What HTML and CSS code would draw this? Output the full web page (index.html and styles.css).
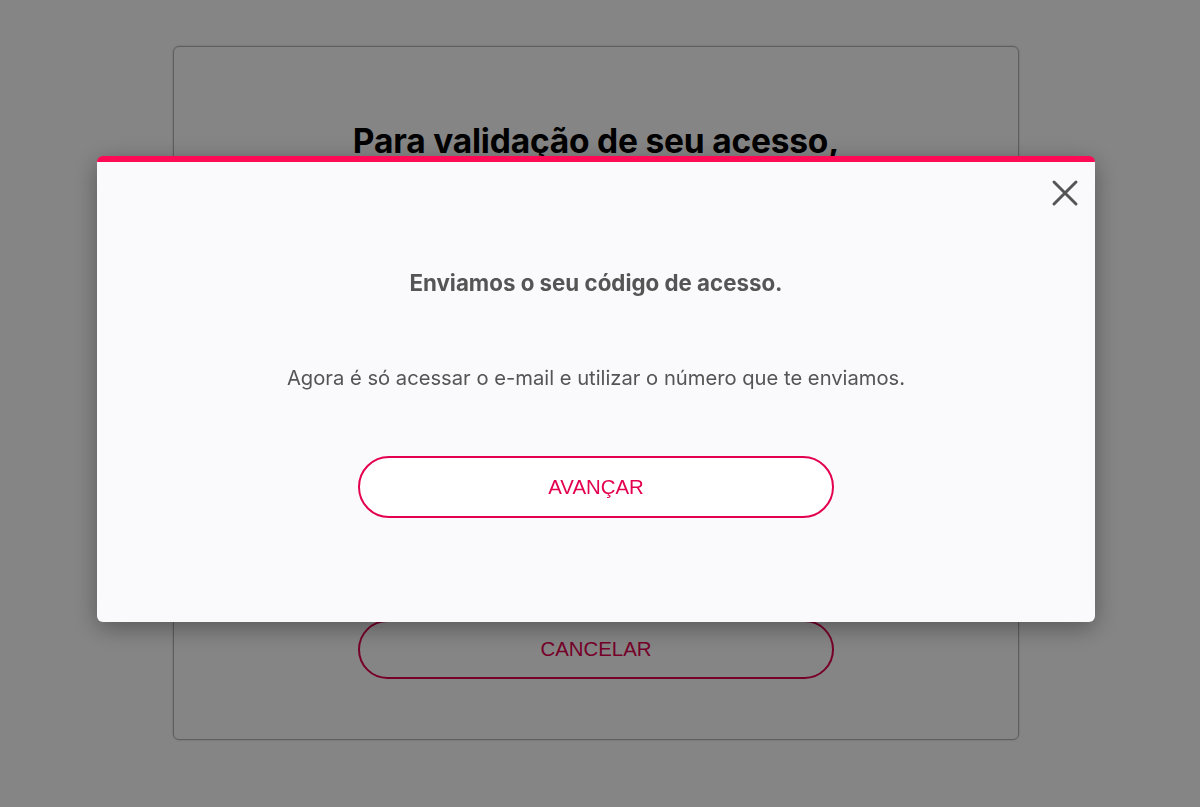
FILE: index.html
```html
<!DOCTYPE html>
<html lang="pt-BR">
<head>
<meta charset="utf-8">
<link rel="stylesheet" href="styles.css">
</head>
<body>
<main class="card">
  <h1 class="card-title">Para validação de seu acesso,</h1>
  <div class="card-spacer"></div>
  <button class="pill pill-cancel">CANCELAR</button>
</main>
<div class="overlay">
  <section class="modal">
    <button class="close" aria-label="Fechar">
      <svg width="28" height="28" viewBox="0 0 28 28"><path d="M3 3 L25 25 M25 3 L3 25" stroke="#555" stroke-width="3" stroke-linecap="round"/></svg>
    </button>
    <h2 class="modal-title">Enviamos o seu código de acesso.</h2>
    <p class="modal-text">Agora é só acessar o e-mail e utilizar o número que te enviamos.</p>
    <button class="pill pill-next">AVANÇAR</button>
  </section>
</div>
</body>
</html>
```
FILE: styles.css
```css
html, body { margin: 0; padding: 0; }
body {
  background: #fff;
  width: 1200px;
  height: 807px;
  overflow: hidden;
  font-family: Inter, "Noto Sans", sans-serif;
}
.card {
  box-sizing: border-box;
  width: 846px;
  height: 694px;
  margin: 46px 0 0 173px;
  border: 1.5px solid #b5b5b5;
  border-radius: 6px;
  box-shadow: 0 0 2px rgba(0, 0, 0, 0.25);
  display: flex;
  flex-direction: column;
  align-items: center;
  padding-top: 72px;
}
.card-title {
  margin: 0;
  font-size: 33.5px;
  line-height: 44px;
  font-weight: 700;
  color: #000;
  letter-spacing: -0.2px;
}
.card-spacer { height: 457px; }
.pill {
  box-sizing: border-box;
  width: 476px;
  background: #fff;
  border: 2px solid #e3004f;
  border-radius: 31px;
  color: #e3004f;
  font-family: "Liberation Sans", Arial, sans-serif;
  font-size: 20.4px;
  cursor: pointer;
}
.pill-cancel { height: 59px; }
.overlay {
  position: fixed;
  inset: 0;
  background: rgba(0, 0, 0, 0.48);
}
.modal {
  position: absolute;
  left: 97px;
  top: 156px;
  width: 998px;
  height: 466px;
  box-sizing: border-box;
  background: #fafafc;
  border-top: 6px solid #ff0a55;
  border-radius: 6px;
  box-shadow: 0 6px 24px rgba(0, 0, 0, 0.35);
  display: flex;
  flex-direction: column;
  align-items: center;
  padding-top: 105px;
}
.close {
  position: absolute;
  top: 14px;
  right: 13px;
  width: 34px;
  height: 34px;
  padding: 3px;
  background: none;
  border: 0;
  cursor: pointer;
}
.close svg { display: block; }
.modal-title {
  margin: 0;
  font-size: 22.3px;
  font-weight: 700;
  color: #555;
  line-height: 32px;
}
.modal-text {
  margin: 65px 0 0;
  font-size: 20.2px;
  font-weight: 400;
  color: #555;
  line-height: 28px;
}
.pill-next {
  margin-top: 64px;
  height: 62px;
  background: #fff;
}
```
